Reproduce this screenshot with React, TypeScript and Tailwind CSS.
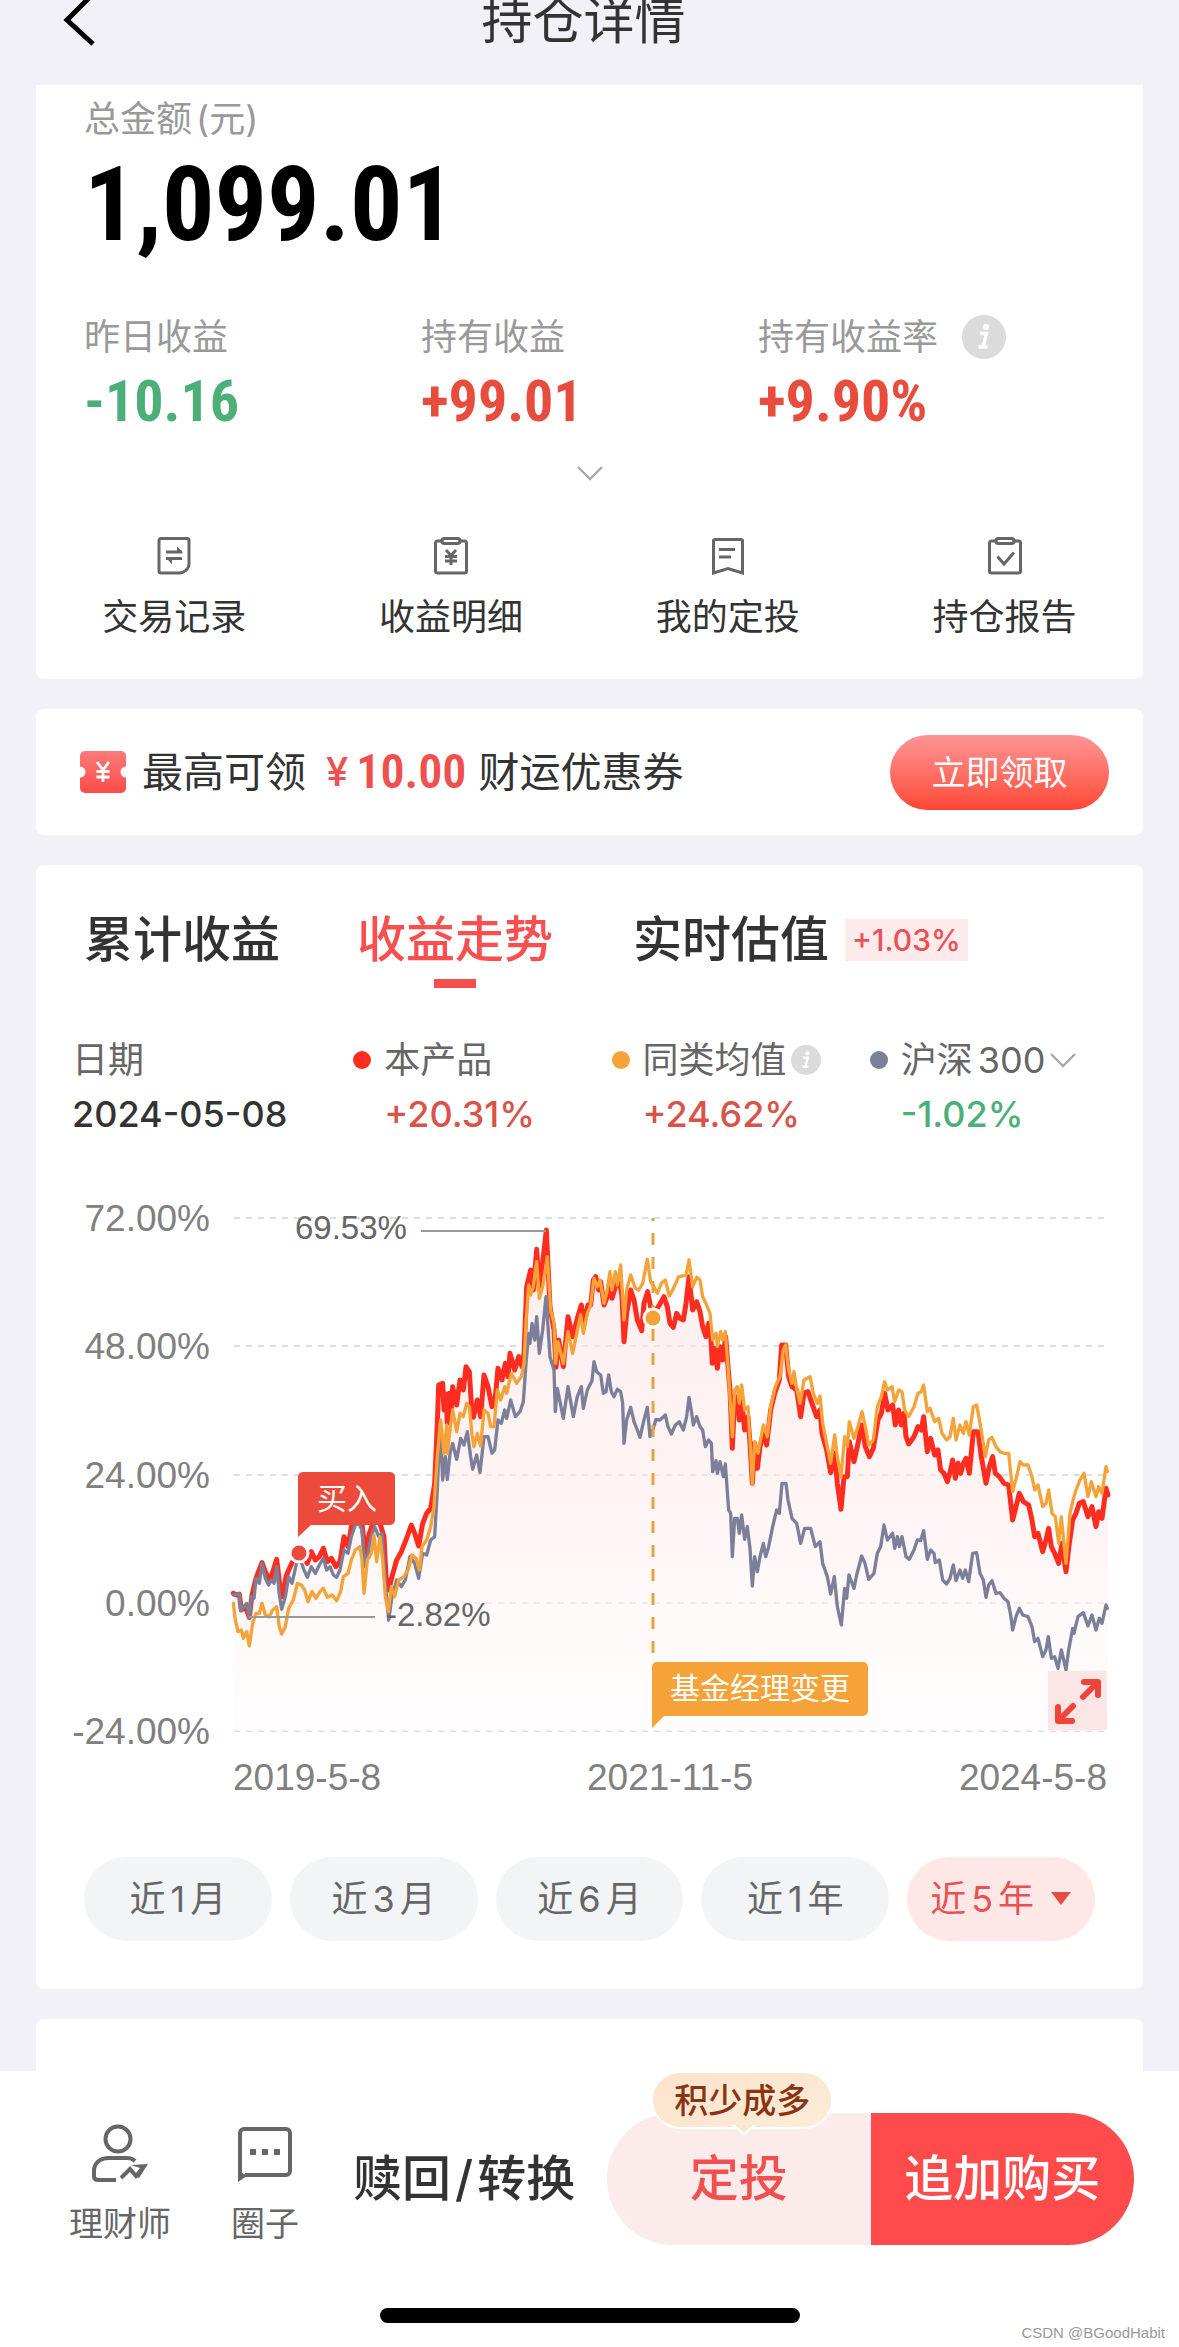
import React from "react";

const RED_LINE =
  "100,1210 110,1215 118,1212 124,1260 136,1250 148,1282 156,1215 168,1165 186,1118 198,1150 210,1170 220,1140 230,1108 240,1190 248,1220 258,1160 266,1140 280,1110 296,1088 310,1095 322,1120 334,1085 346,1110 358,1100 370,1075 382,1115 394,1105 408,1130 420,1115 432,1040 444,1070 456,1000 470,990 486,1000 496,1090 508,1030 524,985 540,1000 552,1040 558,1160 566,1200 576,1160 590,1110 604,1085 618,1050 634,1005 644,1030 656,1068 668,1000 680,970 692,955 704,880 712,700 716,585 728,580 732,660 738,612 742,700 748,610 752,680 758,590 770,645 780,570 790,600 798,530 808,545 814,640 820,682 832,630 842,680 852,555 864,590 876,650 886,620 894,535 906,570 916,520 924,560 930,490 944,540 956,500 966,530 972,490 980,290 992,240 1000,300 1010,178 1018,300 1030,200 1039,120 1050,350 1062,420 1068,532 1076,450 1090,530 1104,380 1118,440 1132,385 1144,345 1152,400 1164,345 1172,345 1180,270 1187,260 1196,300 1202,275 1212,345 1222,320 1230,270 1236,325 1248,285 1258,270 1266,320 1272,455 1280,370 1292,300 1302,330 1312,390 1325,422 1332,340 1343,305 1352,350 1362,370 1378,345 1392,320 1402,350 1410,400 1420,412 1430,370 1440,385 1450,390 1458,340 1467,260 1478,360 1490,335 1500,365 1508,410 1518,440 1526,400 1532,430 1537,520 1546,475 1552,535 1560,470 1568,510 1577,440 1584,530 1590,600 1597,775 1604,620 1612,620 1618,690 1625,630 1634,720 1644,680 1650,760 1657,880 1664,760 1672,835 1680,770 1690,730 1700,765 1712,660 1724,610 1738,570 1745,465 1757,465 1766,560 1776,590 1790,600 1802,680 1812,610 1824,605 1836,640 1850,680 1860,660 1866,730 1880,780 1892,848 1904,790 1912,880 1923,958 1932,860 1942,860 1948,755 1962,815 1972,770 1985,705 1996,770 2008,800 2020,775 2034,690 2044,670 2054,610 2064,660 2078,645 2086,705 2096,660 2104,705 2112,670 2118,740 2126,762 2142,740 2154,710 2164,720 2171,680 2182,785 2192,745 2204,795 2214,780 2222,840 2232,850 2242,875 2252,840 2258,810 2266,865 2274,820 2282,850 2290,820 2298,805 2308,850 2320,725 2334,725 2344,800 2358,880 2368,830 2378,800 2386,850 2398,860 2412,880 2426,885 2438,990 2448,950 2458,910 2470,935 2486,945 2496,990 2504,1040 2514,1030 2528,1085 2538,1050 2546,1015 2554,1070 2564,1090 2576,1120 2586,1060 2598,1145 2608,1060 2618,990 2628,970 2638,940 2650,935 2664,980 2676,950 2688,1010 2696,965 2706,985 2718,895 2724,915";

const GREY_LINE =
  "100,1215 118,1212 122,1262 140,1240 148,1282 155,1220 162,1225 168,1165 178,1180 186,1120 196,1165 206,1185 214,1170 222,1180 230,1130 238,1215 245,1258 256,1220 266,1160 276,1180 290,1118 302,1112 312,1140 322,1162 334,1130 346,1150 358,1125 370,1105 380,1140 390,1130 400,1155 410,1162 420,1140 432,1080 444,1090 454,1040 466,1005 476,1000 486,1020 494,1130 504,1090 514,1040 524,1010 536,1040 546,1030 556,1180 566,1290 576,1220 590,1170 604,1190 616,1170 630,1100 644,1120 656,1165 668,1090 680,1095 692,1050 704,1040 712,900 720,700 728,870 736,800 742,868 750,790 758,760 770,808 782,745 792,765 802,725 812,800 818,838 830,795 840,848 852,740 864,740 876,790 884,780 894,690 904,700 914,660 920,685 932,630 946,680 960,665 970,635 978,520 986,430 990,460 996,400 1004,450 1010,380 1018,490 1028,420 1038,320 1050,500 1062,540 1066,665 1072,595 1090,685 1104,590 1120,680 1132,620 1144,590 1150,655 1162,600 1176,572 1182,515 1190,545 1202,555 1210,610 1218,605 1226,555 1234,605 1242,620 1252,598 1262,605 1268,640 1272,760 1280,690 1292,652 1302,695 1312,720 1320,742 1332,690 1342,652 1350,740 1360,715 1368,688 1380,690 1396,675 1404,710 1414,732 1426,705 1438,695 1450,720 1460,680 1467,622 1476,675 1480,705 1490,680 1500,710 1508,720 1516,770 1526,750 1534,760 1538,845 1548,812 1552,850 1560,815 1570,860 1576,822 1586,960 1592,970 1597,1100 1604,985 1612,985 1618,1030 1625,975 1634,1048 1642,1010 1650,1075 1657,1188 1664,1100 1672,1145 1680,1100 1690,1060 1697,1100 1706,1070 1718,1010 1730,960 1738,970 1746,880 1758,880 1764,930 1776,985 1790,1000 1802,1060 1814,1015 1832,1015 1846,1070 1860,1055 1868,1120 1882,1160 1892,1212 1903,1160 1912,1250 1924,1305 1934,1195 1940,1225 1947,1155 1962,1195 1970,1155 1985,1098 1995,1120 2006,1168 2022,1150 2032,1090 2042,1070 2052,1005 2062,1050 2078,1030 2084,1075 2092,1040 2098,1070 2106,1040 2118,1100 2128,1108 2142,1080 2152,1050 2162,1052 2171,1022 2182,1108 2192,1080 2202,1090 2206,1118 2218,1110 2228,1170 2240,1182 2250,1165 2260,1125 2268,1172 2280,1140 2288,1165 2296,1140 2306,1175 2318,1090 2330,1088 2340,1150 2350,1170 2358,1222 2366,1185 2376,1172 2388,1210 2400,1208 2412,1225 2424,1235 2432,1275 2438,1320 2448,1280 2458,1255 2468,1275 2484,1280 2496,1310 2504,1355 2514,1345 2528,1400 2538,1380 2545,1340 2554,1405 2564,1400 2574,1435 2584,1380 2598,1440 2606,1380 2618,1315 2622,1330 2634,1280 2650,1268 2664,1308 2676,1275 2688,1320 2698,1285 2706,1300 2718,1245 2722,1255";

const YELLOW_LINE =
  "100,1240 106,1290 114,1325 124,1320 130,1345 140,1325 148,1368 158,1300 168,1270 178,1270 186,1240 196,1275 208,1280 218,1260 230,1250 238,1310 245,1332 256,1310 266,1255 280,1230 292,1180 304,1185 314,1200 324,1235 336,1205 348,1225 360,1205 370,1195 382,1222 396,1215 410,1232 422,1205 430,1160 444,1150 454,1110 466,1080 480,1070 486,1110 492,1210 502,1110 514,1090 522,1035 530,1115 540,1040 548,1110 556,1220 565,1265 574,1190 584,1220 596,1170 612,1160 624,1140 636,1095 648,1105 658,1140 666,1070 680,1050 692,1010 702,950 712,800 722,690 732,790 740,705 742,790 750,720 758,660 770,725 780,670 790,680 800,640 808,650 816,735 822,770 832,730 842,768 852,660 864,670 872,710 882,710 892,600 902,630 914,590 920,610 934,550 950,580 964,560 972,520 978,400 986,285 992,315 1000,290 1010,215 1018,325 1028,290 1042,200 1052,360 1062,400 1067,520 1074,455 1090,520 1104,425 1118,490 1130,430 1142,375 1150,430 1162,370 1172,345 1182,265 1192,290 1200,270 1212,340 1222,300 1230,245 1236,300 1246,245 1252,285 1262,225 1272,390 1280,300 1292,255 1306,295 1316,300 1328,280 1342,208 1352,275 1362,290 1372,310 1384,280 1396,270 1408,318 1418,300 1436,260 1448,258 1458,255 1467,210 1478,290 1490,262 1500,270 1508,320 1520,345 1530,370 1538,450 1548,430 1552,470 1562,425 1568,450 1576,425 1586,560 1597,740 1604,600 1612,590 1618,640 1625,585 1634,660 1644,650 1650,750 1657,882 1664,755 1674,790 1690,705 1702,740 1712,650 1726,590 1740,560 1750,480 1757,465 1766,540 1776,580 1782,545 1790,595 1800,640 1812,570 1830,560 1840,610 1852,640 1860,618 1868,700 1880,760 1892,820 1904,735 1912,800 1923,862 1934,740 1942,770 1948,695 1962,745 1974,710 1986,665 1996,710 2006,765 2020,750 2032,650 2044,620 2054,575 2062,600 2076,590 2084,635 2096,600 2106,605 2114,660 2126,680 2142,650 2154,610 2164,605 2171,585 2182,665 2190,655 2204,695 2216,685 2226,730 2240,750 2250,740 2260,685 2268,750 2280,705 2290,730 2298,695 2308,735 2320,650 2330,645 2342,710 2356,800 2366,750 2376,742 2388,770 2400,785 2412,790 2426,790 2438,905 2450,860 2460,815 2470,825 2484,825 2496,860 2504,900 2514,885 2528,950 2538,940 2546,900 2556,970 2566,980 2576,1060 2584,980 2598,1120 2610,970 2618,935 2628,900 2640,870 2652,850 2664,920 2674,875 2688,920 2696,890 2706,910 2718,830 2722,845";

const GRID = [
  { y: 1218, label: "72.00%" },
  { y: 1346, label: "48.00%" },
  { y: 1475, label: "24.00%" },
  { y: 1603, label: "0.00%" },
  { y: 1731, label: "-24.00%" },
];

const sans = "font-['Inter','Noto_Sans_CJK_SC',sans-serif]";
const din =
  "font-['Liberation_Sans_Narrow','Roboto_Condensed','Roboto','Noto_Sans_CJK_SC',sans-serif]";

function InfoIcon({ className }: { className: string }) {
  return (
    <svg viewBox="0 0 44 44" className={className} aria-label="说明">
      <circle cx="22" cy="22" r="22" fill="#dbdbdb" />
      <circle cx="24" cy="12" r="3" fill="#fff" />
      <path d="M18 18.5h6.5L21 32h4.5M16.5 32H21" fill="none" stroke="#fff" strokeWidth="3.4" />
    </svg>
  );
}

function Chevron({ className }: { className: string }) {
  return (
    <svg viewBox="0 0 28 16" className={className} fill="none" stroke="#a9a9a9" strokeWidth="2.4">
      <path d="M2 2l12 12L26 2" />
    </svg>
  );
}

function Clipboard({ children }: { children: React.ReactNode }) {
  return (
    <>
      <path d="M9 4H4.500a2 2 0 0 0-2 2v28a2 2 0 0 0 2 2h27a2 2 0 0 0 2-2V6a2 2 0 0 0-2-2H27" />
      <rect x="9" y="1.500" width="18" height="5" rx="2.400" />
      {children}
    </>
  );
}

const actions = [
  {
    label: "交易记录",
    icon: (
      <>
        <path d="M5 1.500h26a2 2 0 0 1 2 2V27c0 5-5 9-10 9H5a2 2 0 0 1-2-2V3.500a2 2 0 0 1 2-2z" />
        <path d="M10 15h16M10 21.500h16" />
        <path d="M21 9.500l6 6h-6zM10 20.500h6v7z" fill="#666" stroke="none" />
      </>
    ),
  },
  {
    label: "收益明细",
    icon: (
      <Clipboard>
        <path d="M13 13l5 5.500 5-5.500M18 18v10M12 19.500h12M12 24h12" />
      </Clipboard>
    ),
  },
  {
    label: "我的定投",
    icon: (
      <>
        <path d="M5 2.500h26a1.500 1.500 0 0 1 1.500 1.500v32L18 31.500 3.500 36V4A1.500 1.500 0 0 1 5 2.500z" />
        <path d="M9 12.500h16M9 20h12" />
      </>
    ),
  },
  {
    label: "持仓报告",
    icon: (
      <Clipboard>
        <path d="M10.500 19.500l6.500 7.500 10-11.500" />
      </Clipboard>
    ),
  },
];

const stats = [
  { label: "昨日收益", value: "-10.16", tone: "text-[#4caf79]", info: false },
  { label: "持有收益", value: "+99.01", tone: "text-[#e74c3c]", info: false },
  { label: "持有收益率", value: "+9.90%", tone: "text-[#e74c3c]", info: true },
];

function SummaryCard() {
  return (
    <section className="rounded-b-lg bg-white pt-[14px] pb-[42px]">
      <div className="px-12">
        <p className="text-[36px] leading-10 text-[#999]">
          总金额<span className="ml-1">(元)</span>
        </p>
        <p className={`${din} mt-[14px] text-[104px] leading-[104px] font-bold text-black`}>1,099.01</p>
        <dl className="mt-[60px] grid grid-cols-3">
          {stats.map((s) => (
            <div key={s.label}>
              <dt className="flex h-10 items-center gap-6 text-[36px] leading-10 whitespace-nowrap text-[#999]">
                {s.label}
                {s.info && <InfoIcon className="size-11" />}
              </dt>
              <dd className={`${din} mt-3 text-[58px] leading-[64px] font-bold ${s.tone}`}>{s.value}</dd>
            </div>
          ))}
        </dl>
      </div>
      <button type="button" aria-label="展开" className="mx-auto mt-8 block">
        <Chevron className="h-4 w-7" />
      </button>
      <nav className="mt-14 grid grid-cols-4">
        {actions.map((a) => (
          <a key={a.label} href="#" className="flex flex-col items-center text-[36px] leading-10 text-[#333]">
            <svg viewBox="0 0 36 38" className="mb-[22px] h-[38px] w-9" fill="none" stroke="#666" strokeWidth="3">
              {a.icon}
            </svg>
            {a.label}
          </a>
        ))}
      </nav>
    </section>
  );
}

function CouponCard() {
  return (
    <section className="flex h-[126px] items-center rounded-lg bg-white pr-[34px] pl-11">
      <svg viewBox="0 0 46 42" className="mr-4 h-[42px] w-[46px]">
        <defs>
          <linearGradient id="ticket" x1="0" y1="0" x2="0" y2="1">
            <stop offset="0" stopColor="#fb7a78" />
            <stop offset="1" stopColor="#fb4c49" />
          </linearGradient>
        </defs>
        <path
          d="M5 0h36a5 5 0 0 1 5 5v10.500a5.500 5.500 0 0 0 0 11V37a5 5 0 0 1-5 5H5a5 5 0 0 1-5-5V26.500a5.500 5.500 0 0 0 0-11V5a5 5 0 0 1 5-5z"
          fill="url(#ticket)"
        />
        <path d="M17 11l6 8 6-8M23 19v12M16.500 20.500h13M16.500 26h13" fill="none" stroke="#fff" strokeWidth="2.8" />
      </svg>
      <p className="flex items-center text-[41px] leading-[50px] whitespace-nowrap text-[#333]">
        最高可领
        <span className="ml-5 flex items-center font-medium text-[#f04f4f]">
          <span className="text-[40px]">¥</span>
          <span className={`${din} ml-2 text-[48px] font-semibold`}>10.00</span>
        </span>
        <span className="ml-3">财运优惠券</span>
      </p>
      <button
        type="button"
        className="ml-auto h-[75px] w-[219px] rounded-full bg-linear-to-b from-[#fd9493] to-[#fe4433] text-[34px] text-white"
      >
        立即领取
      </button>
    </section>
  );
}

function Callout({ d, fill, x, y, children }: { d: string; fill: string; x: number; y: number; children: string }) {
  return (
    <g className={sans}>
      <path d={d} fill={fill} />
      <text x={x} y={y} fontSize="30" fill="#fff">
        {children}
      </text>
    </g>
  );
}

function Chart() {
  return (
    <div className="relative">
      <svg
        viewBox="36 1190 1107 630"
        className="block h-auto w-full font-['Liberation_Sans',sans-serif]"
        role="img"
        aria-label="收益走势"
      >
        <defs>
          <linearGradient id="area" gradientUnits="userSpaceOnUse" x1="0" y1="100" x2="0" y2="1623">
            <stop offset="0" stopColor="#fbe0e0" stopOpacity=".55" />
            <stop offset=".5" stopColor="#fdecec" stopOpacity=".6" />
            <stop offset="1" stopColor="#fefcfc" stopOpacity=".6" />
          </linearGradient>
        </defs>
        {GRID.map((g) => (
          <g key={g.label}>
            <line x1="234" x2="1107" y1={g.y} y2={g.y} stroke="#dedede" strokeWidth="2" strokeDasharray="6 6" />
            <text x="210" y={g.y + 13} fontSize="37" textAnchor="end" fill="#808080">
              {g.label}
            </text>
          </g>
        ))}
        <g transform="translate(200 1190) scale(.33333)" fill="none" strokeLinejoin="round" strokeLinecap="round">
          <polygon points={`100,1623 ${RED_LINE} 2724,1623`} fill="url(#area)" />
          <polyline points={RED_LINE} stroke="#fe2d1f" strokeWidth="15" />
          <polyline points={GREY_LINE} stroke="#7b7f99" strokeWidth="10" />
          <polyline points={YELLOW_LINE} stroke="#f5a238" strokeWidth="10" />
        </g>
        <line x1="653" x2="653" y1="1218" y2="1660" stroke="#e8a340" strokeWidth="3" strokeDasharray="12 12" strokeDashoffset="9" />
        <circle cx="653" cy="1318" r="9" fill="#f5a238" stroke="#fff" strokeWidth="3" />
        <path d="M421 1231h125M249 1617h126" stroke="#999" strokeWidth="2" />
        <text x="295" y="1239" fontSize="33" fill="#666">
          69.53%
        </text>
        <text x="386" y="1626" fontSize="33" fill="#666">
          -2.82%
        </text>
        <Callout
          d="M303 1472h87a5 5 0 0 1 5 5v43a5 5 0 0 1-5 5h-79l-13 12v-60a5 5 0 0 1 5-5z"
          fill="#ec4a3b"
          x={317}
          y={1509}
        >
          买入
        </Callout>
        <circle cx="299" cy="1553" r="9" fill="#ec4a3b" stroke="#fff" strokeWidth="3" />
        <Callout
          d="M657 1662h206a5 5 0 0 1 5 5v44a5 5 0 0 1-5 5H664l-12 12v-61a5 5 0 0 1 5-5z"
          fill="#f5a238"
          x={670}
          y={1699}
        >
          基金经理变更
        </Callout>
        <g fontSize="37" fill="#808080">
          <text x="233" y="1790">2019-5-8</text>
          <text x="670" y="1790" textAnchor="middle">2021-11-5</text>
          <text x="1107" y="1790" textAnchor="end">2024-5-8</text>
        </g>
      </svg>
      <button
        type="button"
        aria-label="全屏"
        className="absolute right-9 bottom-[90px] flex size-[59px] items-center justify-center bg-[#fce6e5]"
      >
        <svg viewBox="0 0 46 46" className="size-[46px]" fill="none" stroke="#ee443a" strokeWidth="6" strokeLinecap="round" strokeLinejoin="round">
          <path d="M28 19L42 5M29 4h14v13M18 28L4 42M3 29v14h14" />
        </svg>
      </button>
    </div>
  );
}

const legend = [
  { label: "本产品", value: "+20.31%", dot: "bg-[#fe2d1f]", tone: "text-[#d9534a]" },
  { label: "同类均值", value: "+24.62%", dot: "bg-[#f5a238]", tone: "text-[#d9534a]" },
  { label: "沪深", value: "-1.02%", dot: "bg-[#7b7f99]", tone: "text-[#4caf79]" },
];

const ranges = [
  { count: 1, unit: "月" },
  { count: 3, unit: "月" },
  { count: 6, unit: "月" },
  { count: 1, unit: "年" },
];

function TrendCard() {
  return (
    <section className="rounded-lg bg-white pb-12">
      <div className="flex items-start pt-[50px] pl-12 text-[49px] leading-[50px] font-medium text-[#333]">
        <button type="button" className="font-medium">累计收益</button>
        <button type="button" className="ml-[77px] flex flex-col items-center font-medium text-[#f94f4f]">
          收益走势
          <span className="mt-[14px] h-[9px] w-[42px] bg-[#f44f4f]" />
        </button>
        <button type="button" className="ml-20 flex items-center font-medium">
          实时估值
          <span className="ml-4 bg-[#fdeaea] px-[7px] text-[30px] leading-[42px] text-[#ea5055]">+1.03%</span>
        </button>
      </div>
      <div className="mt-[52px] grid grid-cols-[281fr_258fr_258fr_236fr] pr-[37px] pl-9 text-[36px] leading-10 whitespace-nowrap text-[#666]">
        <div>
          <p>日期</p>
          <p className="mt-[14px] font-medium text-[#333]">2024-05-08</p>
        </div>
        {legend.map((l, i) => (
          <div key={l.label}>
            <p className="flex items-center">
              <span className={`mr-[13px] size-[18px] rounded-full ${l.dot}`} />
              {l.label}
              {i === 1 && <InfoIcon className="ml-1 size-[30px]" />}
              {i === 2 && (
                <>
                  <span className="ml-[5px]">300</span>
                  <Chevron className="ml-1 h-4 w-7" />
                </>
              )}
            </p>
            <p className={`mt-[14px] pl-[31px] font-medium ${l.tone}`}>{l.value}</p>
          </div>
        ))}
      </div>
      <div className="mt-14">
        <Chart />
      </div>
      <div className="mt-[37px] flex gap-[18px] px-12 text-[36px] text-[#666]">
        {ranges.map((r) => (
          <button key={`${r.count}${r.unit}`} type="button" className="h-[84px] flex-1 rounded-full bg-[#f3f4f5]">
            近<span className="mx-[5px]">{r.count}</span>
            {r.unit}
          </button>
        ))}
        <button
          type="button"
          className="flex h-[84px] flex-1 items-center justify-center rounded-full bg-[#fde8e7] text-[#ea5050]"
        >
          近<span className="mx-[5px]">5</span>年
          <svg viewBox="0 0 22 14" className="ml-4 h-[14px] w-[22px]" fill="#ea4b3c">
            <path d="M1 0h20L11 13z" />
          </svg>
        </button>
      </div>
    </section>
  );
}

function Footer() {
  return (
    <footer className="relative flex-1 bg-white pt-[42px]">
      <div className="flex pr-[45px] pl-[69px]">
        <a href="#" className="flex flex-col items-center pt-[11px] text-[34px] leading-10 text-[#666]">
          <svg viewBox="0 0 58 58" className="mb-[22px] size-[58px]" fill="none" stroke="#666" strokeWidth="4">
            <circle cx="27" cy="15" r="12.500" />
            <path d="M44 37c-2-2-5-3-8-3H18C9 34 3 39 3 47v5c0 3 1.500 4 4 4h18" />
            <path d="M30 54l9-9 6 7 6-7" />
            <path d="M57 40l-17 1 9 3-5 8 4 2z" fill="#666" stroke="none" />
          </svg>
          理财师
        </a>
        <a href="#" className="ml-[60px] flex flex-col items-center pt-[11px] text-[34px] leading-10 text-[#666]">
          <svg viewBox="0 0 58 58" className="mb-[22px] size-[58px]" fill="none" stroke="#666" strokeWidth="4">
            <path d="M4 50V9a4 4 0 0 1 4-4h42a4 4 0 0 1 4 4v38a4 4 0 0 1-4 4H9" />
            <path d="M2 46v12l9-6z" fill="#666" stroke="none" />
            <path d="M14 28h6M26 28h6M38 28h6" strokeWidth="6" />
          </svg>
          圈子
        </a>
        <button type="button" className="mr-8 ml-[54px] text-[49px] font-medium whitespace-nowrap text-[#333]">
          赎回<span className="mx-1">/</span>转换
        </button>
        <div className="relative flex h-[132px] flex-1 text-[49px] font-medium">
          <button type="button" className="flex-1 rounded-l-full bg-[#fcebeb] text-[#f05050]">
            定投
          </button>
          <button type="button" className="flex-1 rounded-r-full bg-[#ff4b4b] text-white">
            追加购买
          </button>
          <div className="absolute -top-[42px] left-11 flex h-[58px] w-[182px] items-center justify-center rounded-full border-2 border-white bg-linear-to-br from-[#fbe3cd] to-[#fdecd6] text-[34px] text-[#8a3313]">
            积少成多
            <svg viewBox="0 0 28 12" className="absolute top-[52px] left-[77px] h-3 w-7">
              <path d="M2 0l12 11L26 0z" fill="#fff" />
              <path d="M5 0l9 8 9-8z" fill="#fce8d2" />
            </svg>
          </div>
        </div>
      </div>
      <div className="mx-auto mt-[63px] mb-6 h-[15px] w-[420px] max-w-full rounded-full bg-black" />
      <p className="absolute right-[14px] bottom-1 font-['Liberation_Sans',sans-serif] text-[15px] leading-5 text-[#999]">
        CSDN @BGoodHabit
      </p>
    </footer>
  );
}

export default function App() {
  return (
    <div className={`${sans} flex min-h-screen flex-col overflow-hidden bg-[#f2f1f7]`}>
      <header className="relative flex h-[85px] items-start justify-center">
        <button type="button" aria-label="返回" className="absolute top-0 left-[60px]">
          <svg viewBox="0 0 36 46" className="h-[46px] w-9" fill="none" stroke="#000" strokeWidth="5">
            <path d="M33-6L7 20l26 24" />
          </svg>
        </button>
        <h1 className="pr-3 text-[51px] leading-[42px] text-[#333]">持仓详情</h1>
      </header>
      <main className="flex flex-col gap-[30px] px-9">
        <SummaryCard />
        <CouponCard />
        <TrendCard />
        <section className="h-[52px] rounded-t-lg bg-white" />
      </main>
      <Footer />
    </div>
  );
}
